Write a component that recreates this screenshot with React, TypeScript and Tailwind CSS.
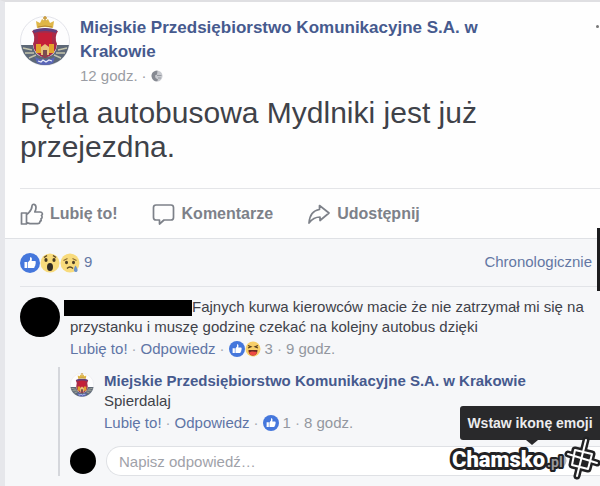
import React from "react";

function Crest({ className }: { className: string }) {
  return (
    <svg viewBox="0 0 50 50" className={className} role="img" aria-label="MPK Kraków">
      <circle cx="25" cy="25" r="24.5" fill="#fdfdfe" stroke="#e3e4ea" />
      <path d="M1 29 L13 29 C14 37 18 41 25 41 C32 41 36 37 37 29 L49 29 C47 41 38 49 25 49 C12 49 3 41 1 29Z" fill="#5d6877" />
      <path d="M3 32l9 2M5 37l9 0M9 42l7-3M47 32l-9 2M45 37l-9 0M41 42l-7-3" stroke="#c3c3ac" strokeWidth="1.4" />
      <path d="M15 41 Q25 47 35 41 L33 47 Q25 51 17 47Z" fill="#5a66b8" />
      <path d="M18 45l3 1 2-2 3 2 3-2 3 1" stroke="#e9ecf8" strokeWidth="1.3" fill="none" />
      <path d="M12 15 Q25 10 38 15 Q34 21 37 28 Q36 39 25 42 Q14 39 13 28 Q16 21 12 15Z" fill="#a82a48" />
      <path d="M18 17h14v13h-14z" fill="#c51f38" />
      <path d="M13 14 Q25 10 37 14 L36 17 Q25 13 14 17Z" fill="#5f3f7c" />
      <path d="M16 28h5v9h-5zM29 28h5v9h-5z" fill="#e3a32c" />
      <path d="M21 31l4-3 4 3v8h-8z" fill="#e8c37c" />
      <path d="M23 34h4v7h-4z" fill="#7c4c50" />
      <path d="M17 12 L16 5 L20 7 L22 3 L25 5 L28 3 L30 7 L34 5 L33 12 Q25 10 17 12Z" fill="#dfb647" />
      <path d="M25 0v5M23 2h4" stroke="#c99b3a" strokeWidth="1.5" />
      <path d="M18 11 Q25 9 32 11" stroke="#b58431" fill="none" />
    </svg>
  );
}

function LikeBadge({ className }: { className: string }) {
  return (
    <svg viewBox="0 0 20 20" className={className} aria-hidden="true">
      <circle cx="10" cy="10" r="10" fill="#4577dc" />
      <path d="M4.5 9h2.8v6H4.5zM8 9.300 10 7V4.200c1.800-.4 2.300 1.400 1.600 3.800h3.200c1.200 0 1.400 1.300.7 1.900.5.800.2 1.500-.3 1.900.3.800 0 1.400-.6 1.700 0 1-.5 1.500-1.400 1.500H8z" fill="#fff" />
    </svg>
  );
}

function WowFace() {
  return (
    <svg viewBox="0 0 20 20" className="size-5" aria-hidden="true">
      <circle cx="10" cy="10" r="9.5" fill="#f8db7c" />
      <path d="M4 4.500 7 2.500M13 2.500l3 2" stroke="#5b4524" strokeWidth="1.5" />
      <ellipse cx="6" cy="7" rx="1.6" ry="2" fill="#463a25" />
      <ellipse cx="14" cy="7" rx="1.6" ry="2" fill="#463a25" />
      <ellipse cx="10" cy="14" rx="3" ry="4" fill="#302b25" />
    </svg>
  );
}

function SadFace() {
  return (
    <svg viewBox="0 0 20 20" className="size-5" aria-hidden="true">
      <circle cx="10" cy="10" r="9.5" fill="#f8db7c" />
      <path d="M3.500 7.500 7.500 5.500M12.500 5.500l4 2" stroke="#8a6c35" strokeWidth="1.2" />
      <ellipse cx="6.5" cy="9.5" rx="1.5" ry="1.7" fill="#4c3e27" />
      <ellipse cx="13.5" cy="9.5" rx="1.5" ry="1.7" fill="#4c3e27" />
      <path d="M7 15.500Q10 12.500 13 15.500" stroke="#594624" strokeWidth="1.4" fill="none" />
      <path d="M15.500 12.500c3 4 2.500 6.500.2 6.500s-2.500-3-.2-6.500" fill="#6d94c8" />
    </svg>
  );
}

function HahaFace() {
  return (
    <svg viewBox="0 0 16 16" className="-ml-1 size-4" aria-hidden="true">
      <circle cx="8" cy="8" r="7.5" fill="#f8cf68" />
      <path d="M3 4.500l3 1.200-3 1.300M13 4.500l-3 1.200 3 1.300" stroke="#5b4222" strokeWidth="1.2" fill="none" />
      <path d="M3.500 9h9c0 4-2 5.500-4.500 5.500S3.500 13 3.500 9z" fill="#6e2a22" />
      <path d="M4 11.500c2-1.500 6-1.500 8 0-1 4-7 4-8 0z" fill="#ee4a42" />
    </svg>
  );
}

function Globe() {
  return (
    <svg viewBox="0 0 12 12" className="size-3" aria-label="Publiczne" role="img">
      <circle cx="6" cy="6" r="5.5" fill="#c8cacf" />
      <path d="M6.500.8C3 .5.500 3 .6 6s2.400 5.400 5.700 5.300L7 9.500 4.500 8 4 5.500 6 4.500z" fill="#868a92" />
      <path d="M6 5.500h4.500M7 8h3" stroke="#969aa2" />
    </svg>
  );
}

const stroke = { fill: "none", stroke: "#7d8189", strokeWidth: 1.7, strokeLinejoin: "round" as const, strokeLinecap: "round" as const };

function ThumbIcon() {
  return (
    <svg viewBox="0 0 24 24" className="size-6" {...stroke} aria-hidden="true">
      <path d="M1.500 11h5v11h-5zM6.500 12.500l2-1.500c2-2 3.500-4 3.500-7 0-2.500 4-2.500 4 1.500 0 2-.7 3.500-1.200 4.500H20c2.700 0 3 2.500 1.500 3.500 1 1.200.7 2.600-.5 3.200.5 1.300 0 2.300-1 2.700 0 1.500-.7 2.200-2.500 2.200H10l-3.500-1" />
    </svg>
  );
}

function CommentIcon() {
  return (
    <svg viewBox="0 0 24 24" className="size-6" {...stroke} aria-hidden="true">
      <path d="M4 3h15q2.500 0 2.500 2.500v10q0 2.500-2.500 2.500h-7L7.500 22v-4H4q-2.500 0-2.500-2.500v-10Q1.500 3 4 3z" />
    </svg>
  );
}

function ShareIcon() {
  return (
    <svg viewBox="0 0 24 24" className="size-6" {...stroke} aria-hidden="true">
      <path d="M12.500 3.500 22 11l-9 7.500V15c-5 0-8 2-11 6 .5-7 4-12.500 10.500-13.500z" />
    </svg>
  );
}

const Dot = () => <span className="text-[#a5a9b1]">·</span>;

function CommentActions({ children }: { children: React.ReactNode }) {
  return (
    <div className="flex h-6 items-center gap-1 whitespace-nowrap text-[15px] text-[#9397a0]">
      <button className="text-[#5f75a6]">Lubię to!</button>
      <Dot />
      <button className="text-[#5f75a6]">Odpowiedz</button>
      <Dot />
      {children}
    </div>
  );
}

export default function App() {
  return (
    <div className="relative overflow-hidden border-t-2 border-l-[5px] border-t-[#dfdfe2] border-l-[#e6e7eb] bg-[#f6f7f9] font-['Liberation_Sans',Arial,sans-serif] text-[#3f4249]">
      <article className="bg-[#fefefe]">
        <div className="px-[15px]">
          <header className="flex gap-2.5 pt-3.5">
            <Crest className="size-[50px] shrink-0" />
            <div className="min-w-0 flex-1">
              <h1 className="max-w-[440px] text-[17px] leading-6 font-bold">
                <a href="#strona" className="text-[#465a8e]">Miejskie Przedsiębiorstwo Komunikacyjne S.A. w Krakowie</a>
              </h1>
              <div className="flex h-6 items-center gap-1 text-[15px] text-[#9a9da4]">
                <span>12 godz.</span>
                <span>·</span>
                <Globe />
              </div>
            </div>
            <button aria-label="Opcje" className="-mr-[15px] flex h-5 w-1 items-center">
              <span className="size-[3px] rounded-full bg-[#777]" />
            </button>
          </header>
          <p className="max-w-[500px] pt-2 pb-6 text-[30px] leading-[34px]">Pętla autobusowa Mydlniki jest już przejezdna.</p>
        </div>
        <div className="pl-[15px]">
          <div className="flex h-[50px] items-center gap-[34px] border-t border-[#e4e5e8] text-[16px] font-bold text-[#7d8189]">
            <button className="flex items-center gap-1.5"><ThumbIcon />Lubię to!</button>
            <button className="flex items-center gap-1.5"><CommentIcon />Komentarze</button>
            <button className="flex items-center gap-1.5"><ShareIcon />Udostępnij</button>
          </div>
        </div>
      </article>

      <section className="border-t border-[#dfe1e5] pl-[15px]">
        <div className="flex h-12 items-center border-b border-[#e2e4e8] pr-2 text-[15px] text-[#6477a4]">
          <LikeBadge className="size-5" />
          <WowFace />
          <SadFace />
          <span className="ml-1">9</span>
          <button className="ml-auto">Chronologicznie</button>
        </div>

        <div className="flex gap-2.5 pt-2.5">
          <span className="size-10 shrink-0 rounded-full bg-black" />
          <div className="min-w-0 flex-1 pr-2">
            <p className="text-[15px] leading-5">
              <span className="-ml-1.5 inline-block h-4 w-32 bg-black align-middle" />
              Fajnych kurwa kierowców macie że nie zatrzymał mi się na przystanku i muszę godzinę czekać na kolejny autobus dzięki
            </p>
            <CommentActions>
              <LikeBadge className="size-4" />
              <HahaFace />
              <span>3</span>
              <Dot />
              <span>9 godz.</span>
            </CommentActions>
          </div>
        </div>

        <div className="mt-1.5 ml-[38px] border-l-2 border-[#d5d7dc] pl-2.5">
          <div className="flex gap-2.5 pt-1">
            <Crest className="mt-0.5 size-6 shrink-0" />
            <div className="min-w-0">
              <p className="text-[15px] leading-5 font-bold">
                <a href="#strona" className="text-[#465a8e]">Miejskie Przedsiębiorstwo Komunikacyjne S.A. w Krakowie</a>
              </p>
              <p className="text-[15px] leading-5">Spierdalaj</p>
              <CommentActions>
                <LikeBadge className="size-4" />
                <span>1</span>
                <Dot />
                <span>8 godz.</span>
              </CommentActions>
            </div>
          </div>
          <div className="mt-[11px] flex items-center gap-2.5">
            <span className="size-[26px] shrink-0 rounded-full bg-black" />
            <input
              aria-label="Napisz odpowiedź"
              placeholder="Napisz odpowiedź…"
              className="h-[30px] min-w-0 flex-1 rounded-l-full border border-r-0 border-[#dfe1e5] bg-white px-3 text-[15px] placeholder:text-[#9fa2a9]"
            />
          </div>
        </div>
        <div className="h-2.5" />
      </section>

      <div className="absolute top-[226px] right-0 h-[63px] w-[3px] bg-[#1c1c1e]" />

      <div role="tooltip" className="absolute right-0 bottom-[46px] flex h-[34px] w-[140px] items-center justify-center rounded-l-[3px] bg-[#29292b] text-[14px] font-bold whitespace-nowrap text-[#ececee]">
        Wstaw ikonę emoji
        <span className="absolute top-full left-[66px] border-x-[6px] border-t-[5px] border-x-transparent border-t-[#29292b]" />
      </div>

      <svg viewBox="0 0 154 52" className="absolute right-0 bottom-0 h-[52px] w-[154px] font-[Roboto,sans-serif]" role="img" aria-label="Chamsko.pl">
        <path d="M117 22q5 5-1 11" stroke="#b8b9bc" strokeWidth="2.5" fill="none" />
        <g strokeLinejoin="round" paintOrder="stroke" stroke="#222224">
          <text x="101" y="33" fontSize="14" fontWeight="700" strokeWidth="4" fill="#98989a">.pl</text>
          <text x="6" y="33" fontSize="22" fontWeight="900" strokeWidth="6" fill="#fff">Chamsko</text>
        </g>
        <g strokeLinecap="round" strokeLinejoin="round">
          <path d="M140 6l-9 36M122 20l29 9M129 16l17 4-4 15-16-4z" stroke="#222224" strokeWidth="7" fill="#222224" />
          <path d="M140 6l-9 36M122 20l29 9M129 16l17 4-4 15-16-4z" stroke="#fff" strokeWidth="2" fill="none" />
        </g>
      </svg>
    </div>
  );
}
